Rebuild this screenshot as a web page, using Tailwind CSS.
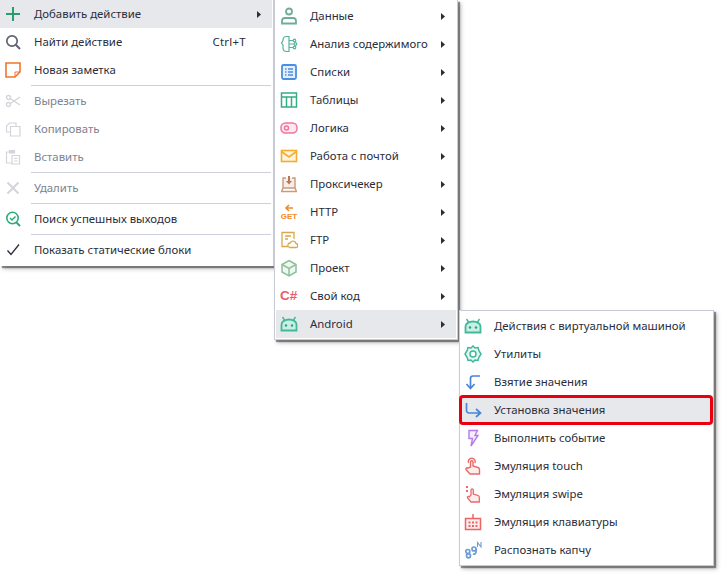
<!DOCTYPE html>
<html><head><meta charset="utf-8"><script src="https://cdn.jsdelivr.net/npm/@tailwindcss/browser@4"></script></head>
<body class="bg-white">
<div class="flex items-start w-[728px] h-[580px] overflow-hidden bg-white font-['Noto_Sans',sans-serif] text-[11.4px] text-[#2a2d3a]">
<!-- menu 1 -->
<div class="w-[274px] shrink-0 bg-white border-r border-[#c9ccd6] pb-[2px] shadow-[2px_2px_1px_rgba(0,0,0,0.4),3px_3px_4px_rgba(0,0,0,0.25)] relative z-[1]">
  <div class="flex items-center h-[28px] bg-[#e7e8ec] mr-[1px]">
    <svg class="w-[16px] h-[16px] ml-[5px] mr-[13px]" viewBox="0 0 16 16"><path d="M8 1v14M1 8h14" stroke="#2a9d6f" stroke-width="2" fill="none"/></svg>
    <span class="flex-1">Добавить действие</span>
    <svg class="w-[4px] h-[7px] mr-[11px]" viewBox="0 0 4 7"><path d="M0 0l4 3.5L0 7z" fill="#2a2d3a"/></svg>
  </div>
  <div class="flex items-center h-[28px]">
    <svg class="w-[16px] h-[16px] ml-[5px] mr-[13px]" viewBox="0 0 16 16"><circle cx="7" cy="7" r="5.2" stroke="#5f6472" stroke-width="1.7" fill="none"/><path d="M10.8 10.8L15 15" stroke="#5f6472" stroke-width="2" fill="none"/></svg>
    <span class="flex-1">Найти действие</span>
    <span class="mr-[27px] tracking-[0.3px]">Ctrl+T</span>
  </div>
  <div class="flex items-center h-[28px]">
    <svg class="w-[16px] h-[16px] ml-[5px] mr-[13px]" viewBox="0 0 16 16"><path d="M1 1h14v9l-5 5H1z" stroke="#f0762a" stroke-width="1.6" fill="none"/><path d="M15 10h-5v5" stroke="#f0762a" stroke-width="1" fill="none"/></svg>
    <span>Новая заметка</span>
  </div>
  <div class="h-[3px] pt-[1px] pl-[31px] pr-[2px]"><div class="h-px bg-[#cdd0da]"></div></div>
  <div class="flex items-center h-[28px] text-[#7d8290]">
    <svg class="w-[16px] h-[16px] ml-[5px] mr-[13px]" viewBox="0 0 16 16"><g stroke="#d3d5db" stroke-width="1.4" fill="none"><circle cx="3.5" cy="4.5" r="2"/><circle cx="3.5" cy="11.5" r="2"/><path d="M5.3 5.5L15 12M5.3 10.5L15 4"/></g></svg>
    <span>Вырезать</span>
  </div>
  <div class="flex items-center h-[28px] text-[#7d8290]">
    <svg class="w-[16px] h-[16px] ml-[5px] mr-[13px]" viewBox="0 0 16 16"><g stroke="#d3d5db" stroke-width="1.2" fill="none"><path d="M5 11H1.500V5L4.500 2H11v3"/><path d="M5.500 5.500H15V15H5.500z"/></g></svg>
    <span>Копировать</span>
  </div>
  <div class="flex items-center h-[28px] text-[#7d8290]">
    <svg class="w-[16px] h-[16px] ml-[5px] mr-[13px]" viewBox="0 0 16 16"><g stroke="#d3d5db" stroke-width="1.200" fill="none"><path d="M5 3H1.500v11H7"/><path d="M4.500 1.500h5V4h-5z" fill="#d3d5db"/><path d="M7 6.500h7.500V15H7zM9 9.500h3.500M9 12h3.500"/></g></svg>
    <span>Вставить</span>
  </div>
  <div class="h-[3px] pt-[1px] pl-[31px] pr-[2px]"><div class="h-px bg-[#cdd0da]"></div></div>
  <div class="flex items-center h-[28px] text-[#7d8290]">
    <svg class="w-[16px] h-[16px] ml-[5px] mr-[13px]" viewBox="0 0 16 16"><path d="M2.500 2.500l11 11M13.500 2.500l-11 11" stroke="#d3d5db" stroke-width="2" fill="none"/></svg>
    <span>Удалить</span>
  </div>
  <div class="h-[3px] pt-[1px] pl-[31px] pr-[2px]"><div class="h-px bg-[#cdd0da]"></div></div>
  <div class="flex items-center h-[28px]">
    <svg class="w-[16px] h-[16px] ml-[5px] mr-[13px]" viewBox="0 0 16 16"><circle cx="7.500" cy="7" r="5.700" stroke="#27ad7a" stroke-width="1.600" fill="none"/><path d="M5 7l2 2 3.500-3.500" stroke="#27ad7a" stroke-width="1.500" fill="none"/><path d="M11.500 11.500L15 15" stroke="#27ad7a" stroke-width="2" fill="none"/></svg>
    <span>Поиск успешных выходов</span>
  </div>
  <div class="h-[3px] pt-[1px] pl-[31px] pr-[2px]"><div class="h-px bg-[#cdd0da]"></div></div>
  <div class="flex items-center h-[28px]">
    <svg class="w-[16px] h-[16px] ml-[5px] mr-[13px]" viewBox="0 0 16 16"><path d="M2.500 8.500l3.500 4L14 2.500" stroke="#2a2d3a" stroke-width="1.300" fill="none"/></svg>
    <span>Показать статические блоки</span>
  </div>
</div>
<!-- menu 2 -->
<div class="w-[184px] shrink-0 bg-white border-x border-[#c9ccd6] border-b py-[1px] shadow-[2px_2px_1px_rgba(0,0,0,0.4),3px_3px_4px_rgba(0,0,0,0.25)] relative z-[2]">
  <div class="flex items-center h-[28px] mx-[1px] mt-[1px]">
    <svg class="w-[18px] h-[18px] ml-[4px] mr-[12px]" viewBox="0 0 18 18"><g stroke="#6fae96" stroke-width="1.800" fill="none"><circle cx="9" cy="4.500" r="3"/><path d="M2 16.500v-2.500a3 3 0 0 1 3-3h8a3 3 0 0 1 3 3v2.500z"/></g></svg>
    <span class="flex-1">Данные</span>
    <svg class="w-[4px] h-[7px] mr-[11px]" viewBox="0 0 4 7"><path d="M0 0l4 3.500L0 7z" fill="#2a2d3a"/></svg>
  </div>
  <div class="flex items-center h-[28px] mx-[1px]">
    <svg class="w-[18px] h-[18px] ml-[4px] mr-[12px]" viewBox="0 0 18 18"><g stroke="#55b49b" stroke-width="1.200" fill="none"><path d="M9 1.500H6.500C4 1.500 3 3.500 3 5.500L1.500 8 3 10v3c0 2 1.500 3.500 3.500 3.500H9z"/><path d="M9 5.500h4M9 9h5M9 12.500h4"/><circle cx="14.500" cy="5.500" r="1.300"/><circle cx="15.500" cy="9" r="1.300"/><circle cx="14.500" cy="12.500" r="1.300"/></g></svg>
    <span class="flex-1">Анализ содержимого</span>
    <svg class="w-[4px] h-[7px] mr-[11px]" viewBox="0 0 4 7"><path d="M0 0l4 3.500L0 7z" fill="#2a2d3a"/></svg>
  </div>
  <div class="flex items-center h-[28px] mx-[1px]">
    <svg class="w-[18px] h-[18px] ml-[4px] mr-[12px]" viewBox="0 0 18 18"><rect x="2" y="2" width="14" height="14" rx="1.500" stroke="#4a8fe0" stroke-width="1.800" fill="#e3effc"/><path d="M5 6h1.500M8 6h5M5 9h1.500M8 9h5M5 12h1.500M8 12h5" stroke="#4a8fe0" stroke-width="1.500" fill="none"/></svg>
    <span class="flex-1">Списки</span>
    <svg class="w-[4px] h-[7px] mr-[11px]" viewBox="0 0 4 7"><path d="M0 0l4 3.500L0 7z" fill="#2a2d3a"/></svg>
  </div>
  <div class="flex items-center h-[28px] mx-[1px]">
    <svg class="w-[18px] h-[18px] ml-[4px] mr-[12px]" viewBox="0 0 18 18"><g stroke="#35ad87" stroke-width="1.500" fill="none"><rect x="1.500" y="2" width="15" height="14"/><path d="M1.500 6h15M6.500 6v10M11.500 6v10"/></g></svg>
    <span class="flex-1">Таблицы</span>
    <svg class="w-[4px] h-[7px] mr-[11px]" viewBox="0 0 4 7"><path d="M0 0l4 3.500L0 7z" fill="#2a2d3a"/></svg>
  </div>
  <div class="flex items-center h-[28px] mx-[1px]">
    <svg class="w-[18px] h-[18px] ml-[4px] mr-[12px]" viewBox="0 0 18 18"><rect x="1" y="4" width="16" height="10" rx="4.500" stroke="#f0769a" stroke-width="1.500" fill="#fde8ef"/><circle cx="6.500" cy="9" r="2" stroke="#f0769a" stroke-width="1.500" fill="none"/></svg>
    <span class="flex-1">Логика</span>
    <svg class="w-[4px] h-[7px] mr-[11px]" viewBox="0 0 4 7"><path d="M0 0l4 3.500L0 7z" fill="#2a2d3a"/></svg>
  </div>
  <div class="flex items-center h-[28px] mx-[1px]">
    <svg class="w-[18px] h-[18px] ml-[4px] mr-[12px]" viewBox="0 0 18 18"><g stroke="#f5ac2f" stroke-width="1.600" fill="#fef3dc"><rect x="1.500" y="3.500" width="15" height="11"/><path d="M1.500 4.500L9 10l7.500-5.500" fill="none"/></g></svg>
    <span class="flex-1">Работа с почтой</span>
    <svg class="w-[4px] h-[7px] mr-[11px]" viewBox="0 0 4 7"><path d="M0 0l4 3.500L0 7z" fill="#2a2d3a"/></svg>
  </div>
  <div class="flex items-center h-[28px] mx-[1px]">
    <svg class="w-[18px] h-[18px] ml-[4px] mr-[12px]" viewBox="0 0 18 18"><g stroke="#c99a7c" stroke-width="1.400" fill="#f8ece4"><path d="M6 3H3v10h12V3h-3"/><path d="M1 16.500h16M3 13l-1.500 3.500M15 13l1.500 3.500" fill="none"/></g><path d="M8 1h2v5h2l-3 3.500L6 6h2z" fill="#b5785a"/></svg>
    <span class="flex-1">Проксичекер</span>
    <svg class="w-[4px] h-[7px] mr-[11px]" viewBox="0 0 4 7"><path d="M0 0l4 3.500L0 7z" fill="#2a2d3a"/></svg>
  </div>
  <div class="flex items-center h-[28px] mx-[1px]">
    <div class="w-[18px] h-[18px] ml-[4px] mr-[12px] flex flex-col items-center">
      <svg class="w-[10px] h-[8px] mt-[1px]" viewBox="0 0 10 8"><path d="M9 4H2M5 1L2 4l3 3" stroke="#f08a2c" stroke-width="1.600" fill="none"/></svg>
      <span class="text-[8px] leading-[9px] font-bold text-[#f08a2c] font-['Liberation_Sans',sans-serif]">GET</span>
    </div>
    <span class="flex-1">HTTP</span>
    <svg class="w-[4px] h-[7px] mr-[11px]" viewBox="0 0 4 7"><path d="M0 0l4 3.500L0 7z" fill="#2a2d3a"/></svg>
  </div>
  <div class="flex items-center h-[28px] mx-[1px]">
    <svg class="w-[18px] h-[18px] ml-[4px] mr-[12px]" viewBox="0 0 18 18"><g stroke="#d9a84e" stroke-width="1.300" fill="none"><path d="M8 15.500H2V1.500h12V8"/><path d="M5 5h6M5 8h3"/><path d="M9.500 16.500h6a2 2 0 0 0 .5-4 3 3 0 0 0-5.700-.5 2.300 2.300 0 0 0-.8 4.500z"/></g></svg>
    <span class="flex-1">FTP</span>
    <svg class="w-[4px] h-[7px] mr-[11px]" viewBox="0 0 4 7"><path d="M0 0l4 3.500L0 7z" fill="#2a2d3a"/></svg>
  </div>
  <div class="flex items-center h-[28px] mx-[1px]">
    <svg class="w-[18px] h-[18px] ml-[4px] mr-[12px]" viewBox="0 0 18 18"><g stroke="#8cc19c" stroke-width="1.500" fill="#eef7f0"><path d="M9 1.500l7 4v7.500l-7 4-7-4V5.500z"/><path d="M2 5.500l7 4 7-4M9 9.500V17" fill="none"/></g></svg>
    <span class="flex-1">Проект</span>
    <svg class="w-[4px] h-[7px] mr-[11px]" viewBox="0 0 4 7"><path d="M0 0l4 3.500L0 7z" fill="#2a2d3a"/></svg>
  </div>
  <div class="flex items-center h-[28px] mx-[1px]">
    <span class="w-[18px] ml-[4px] mr-[12px] text-[13.500px] leading-[18px] font-bold text-[#ef5b65] font-['Liberation_Sans',sans-serif] whitespace-nowrap">C#</span>
    <span class="flex-1">Свой код</span>
    <svg class="w-[4px] h-[7px] mr-[11px]" viewBox="0 0 4 7"><path d="M0 0l4 3.500L0 7z" fill="#2a2d3a"/></svg>
  </div>
  <div class="flex items-center h-[28px] mx-[1px] bg-[#e7e8ec]">
    <svg class="w-[18px] h-[18px] ml-[4px] mr-[12px]" viewBox="0 0 18 18"><path d="M1.500 15.500V9.500C1.500 6.500 5 4.500 9 4.500s7.500 2 7.500 5v6z" fill="#c9eee2" stroke="#3fb99a" stroke-width="1.800"/><path d="M4.500 5L2.500 2M13.500 5l2-3" stroke="#3fb99a" stroke-width="1.400" fill="none"/><circle cx="6" cy="10.500" r="1.200" fill="#2f9f82"/><circle cx="12" cy="10.500" r="1.200" fill="#2f9f82"/></svg>
    <span class="flex-1">Android</span>
    <svg class="w-[4px] h-[7px] mr-[11px]" viewBox="0 0 4 7"><path d="M0 0l4 3.500L0 7z" fill="#2a2d3a"/></svg>
  </div>
</div>
<!-- menu 3 -->
<div class="w-[255px] shrink-0 ml-[1px] mt-[310px] bg-white border border-[#c9ccd6] py-[1px] shadow-[2px_2px_1px_rgba(0,0,0,0.4),3px_3px_4px_rgba(0,0,0,0.25)] relative z-[3]">
  <div class="flex items-center h-[28px]">
    <svg class="w-[18px] h-[18px] ml-[4px] mr-[12px]" viewBox="0 0 18 18"><path d="M1.500 15.500V9.500C1.500 6.500 5 4.500 9 4.500s7.500 2 7.500 5v6z" fill="#c9eee2" stroke="#3fb99a" stroke-width="1.800"/><path d="M4.500 5L2.500 2M13.500 5l2-3" stroke="#3fb99a" stroke-width="1.400" fill="none"/><circle cx="6" cy="10.500" r="1.200" fill="#2f9f82"/><circle cx="12" cy="10.500" r="1.200" fill="#2f9f82"/></svg>
    <span>Действия с виртуальной машиной</span>
  </div>
  <div class="flex items-center h-[28px]">
    <svg class="w-[18px] h-[18px] ml-[4px] mr-[12px]" viewBox="0 0 18 18"><path d="M9 1l2 2 3-.5.800 3L17 9l-2.200 3.500-.8 3-3-.5-2 2-2-2-3 .5-.8-3L1 9l2.200-3.500.8-3 3 .5z" stroke="#3fb99a" stroke-width="1.500" fill="#e6f7f2"/><circle cx="9" cy="9" r="3" stroke="#3fb99a" stroke-width="1.500" fill="#fff"/></svg>
    <span>Утилиты</span>
  </div>
  <div class="flex items-center h-[28px]">
    <svg class="w-[18px] h-[18px] ml-[4px] mr-[12px]" viewBox="0 0 18 18"><path d="M16 3H9a2.500 2.500 0 0 0-2.500 2.500V15M2.500 11l4 4.500 4-4.500" stroke="#4a86d8" stroke-width="1.700" fill="none"/></svg>
    <span>Взятие значения</span>
  </div>
  <div class="flex items-center h-[28px] bg-[#e7e8ec] relative">
    <svg class="w-[18px] h-[18px] ml-[4px] mr-[12px]" viewBox="0 0 18 18"><path d="M2.500 2v7.500A2.500 2.500 0 0 0 5 12h11M12 8l4.500 4L12 16" stroke="#4a86d8" stroke-width="1.700" fill="none"/></svg>
    <span>Установка значения</span>
    <div class="absolute left-[-1px] right-0 top-[-1px] bottom-[-1px] border-[3px] border-[#e8000f] rounded-[4px]"></div>
  </div>
  <div class="flex items-center h-[28px]">
    <svg class="w-[18px] h-[18px] ml-[4px] mr-[12px]" viewBox="0 0 18 18"><path d="M5 1.500h8.500l-2.500 5h3L7 17l1.500-7.500H5z" stroke="#b57be8" stroke-width="1.400" fill="#f6eefd"/></svg>
    <span>Выполнить событие</span>
  </div>
  <div class="flex items-center h-[28px]">
    <svg class="w-[18px] h-[18px] ml-[4px] mr-[12px]" viewBox="0 0 18 18"><g stroke="#ea6a6a" stroke-width="1.400" fill="none"><path d="M4.500 6a3.500 3.500 0 1 1 6.500 0"/><path d="M6.500 10V5a1.200 1.200 0 0 1 2.500 0v4l5 1.500c1 .3 1.500 1 1.500 2V17H6l-4-4.500c-.6-1.200.8-2.200 1.800-1.300z" fill="#fdeeee"/></g></svg>
    <span>Эмуляция touch</span>
  </div>
  <div class="flex items-center h-[28px]">
    <svg class="w-[18px] h-[18px] ml-[4px] mr-[12px]" viewBox="0 0 18 18"><g stroke="#ea6a6a" stroke-width="1.300" fill="#fdeeee"><path d="M7 10V5a1.100 1.100 0 0 1 2.300 0v4l4.500 1.300c1 .3 1.500 1 1.500 2V17H7l-3.500-4c-.6-1.200.8-2 1.800-1.200z"/></g><path d="M2 1h2v2H2zM2 5h2v2H2z" fill="#ea6a6a"/></svg>
    <span>Эмуляция swipe</span>
  </div>
  <div class="flex items-center h-[28px]">
    <svg class="w-[18px] h-[18px] ml-[4px] mr-[12px]" viewBox="0 0 18 18"><rect x="1.500" y="5.500" width="15" height="11" stroke="#ee6464" stroke-width="1.500" fill="#fdecec"/><path d="M9 1v4.500" stroke="#ee6464" stroke-width="1.500"/><path d="M4.500 8.500h2v2h-2zM8 8.500h2v2H8zM11.500 8.500h2v2h-2zM4.500 12h2v2h-2zM8 12h2v2H8zM11.500 12h2v2h-2z" fill="#ee6464"/></svg>
    <span>Эмуляция клавиатуры</span>
  </div>
  <div class="flex items-center h-[28px]">
    <svg class="w-[18px] h-[18px] ml-[4px] mr-[12px]" viewBox="0 0 18 18"><g stroke="#6d9bd6" stroke-width="1.700" fill="none"><circle cx="3.800" cy="10.500" r="2"/><circle cx="4.500" cy="14.800" r="2"/><circle cx="10" cy="8" r="2"/><path d="M12 8v3c0 1.500-1.500 2.500-3 2"/></g><path d="M13.500 6V1.500L17 6V1" stroke="#6d9bd6" stroke-width="1.100" fill="none"/></svg>
    <span>Распознать капчу</span>
  </div>
</div>
</div>
</body></html>
